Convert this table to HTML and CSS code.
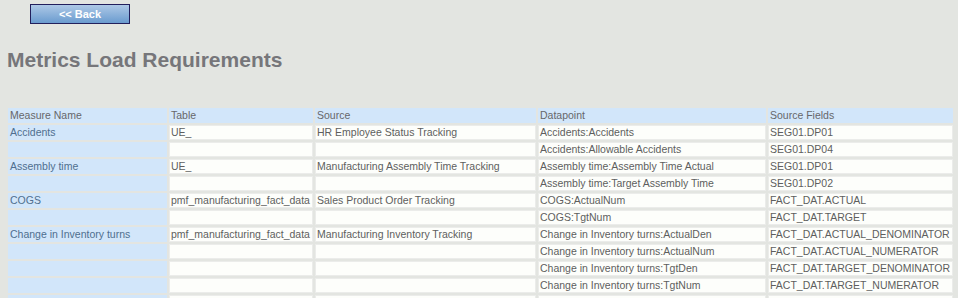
FILE: index.html
```html
<!DOCTYPE html>
<html>
<head>
<meta charset="utf-8">
<title>Metrics Load Requirements</title>
<link rel="stylesheet" href="styles.css">
</head>
<body>
<div class="toolbar">
  <button class="back-btn" type="button">&lt;&lt; Back</button>
</div>
<h1 class="page-title">Metrics Load Requirements</h1>
<table class="req-table">
  <thead>
    <tr><th class="c-measure">Measure Name</th><th class="c-table">Table</th><th class="c-source">Source</th><th class="c-dp">Datapoint</th><th class="c-fields">Source Fields</th></tr>
  </thead>
  <tbody>
    <tr><td class="measure">Accidents</td><td>UE_</td><td>HR Employee Status Tracking</td><td>Accidents:Accidents</td><td>SEG01.DP01</td></tr>
    <tr><td class="measure"></td><td></td><td></td><td>Accidents:Allowable Accidents</td><td>SEG01.DP04</td></tr>
    <tr><td class="measure">Assembly time</td><td>UE_</td><td>Manufacturing Assembly Time Tracking</td><td>Assembly time:Assembly Time Actual</td><td>SEG01.DP01</td></tr>
    <tr><td class="measure"></td><td></td><td></td><td>Assembly time:Target Assembly Time</td><td>SEG01.DP02</td></tr>
    <tr><td class="measure">COGS</td><td>pmf_manufacturing_fact_data</td><td>Sales Product Order Tracking</td><td>COGS:ActualNum</td><td>FACT_DAT.ACTUAL</td></tr>
    <tr><td class="measure"></td><td></td><td></td><td>COGS:TgtNum</td><td>FACT_DAT.TARGET</td></tr>
    <tr><td class="measure">Change in Inventory turns</td><td>pmf_manufacturing_fact_data</td><td>Manufacturing Inventory Tracking</td><td>Change in Inventory turns:ActualDen</td><td>FACT_DAT.ACTUAL_DENOMINATOR</td></tr>
    <tr><td class="measure"></td><td></td><td></td><td>Change in Inventory turns:ActualNum</td><td>FACT_DAT.ACTUAL_NUMERATOR</td></tr>
    <tr><td class="measure"></td><td></td><td></td><td>Change in Inventory turns:TgtDen</td><td>FACT_DAT.TARGET_DENOMINATOR</td></tr>
    <tr><td class="measure"></td><td></td><td></td><td>Change in Inventory turns:TgtNum</td><td>FACT_DAT.TARGET_NUMERATOR</td></tr>
    <tr><td class="measure"></td><td></td><td></td><td></td><td></td></tr>
  </tbody>
</table>
</body>
</html>
```
FILE: styles.css
```css
html, body {
  margin: 0;
  padding: 0;
  background: #e3e5e1;
  font-family: "Liberation Sans", Arial, sans-serif;
}

.toolbar {
  padding: 4px 0 0 30px;
  height: 20px;
}

.back-btn {
  display: block;
  box-sizing: border-box;
  width: 100px;
  height: 20px;
  margin: 0;
  padding: 0;
  border: 1px solid #221f5c;
  background: linear-gradient(#adc8e6, #6a9bcf);
  color: #ffffff;
  font-family: "Liberation Sans", Arial, sans-serif;
  font-size: 11px;
  font-weight: bold;
  line-height: 18px;
  text-align: center;
}

.page-title {
  margin: 24px 0 0 7px;
  font-size: 21px;
  font-weight: bold;
  line-height: 24px;
  color: #76767a;
}

/* requirements grid */
.req-table {
  margin: 34px 0 0 6px;
  border-collapse: separate;
  border-spacing: 2px;
  font-size: 10.5px;
  color: #5e5e5e;
  table-layout: fixed;
  width: 949px;
}

.req-table th,
.req-table td {
  box-sizing: border-box;
  height: 15px;
  padding: 0 1px;
  text-align: left;
  font-weight: normal;
  white-space: nowrap;
  overflow: hidden;
  line-height: 13px;
}

.req-table th {
  background: #d2e6fa;
  border: 1px solid #d2e6fa;
  color: #66666a;
}

.req-table td {
  background: #fdfefb;
  border: 1px solid #ebecea;
}

.req-table td.measure {
  background: #d2e6fa;
  border-color: #d2e6fa;
  color: #4f6f8f;
}

.c-measure { width: 159px; }
.c-table { width: 144px; }
.c-source { width: 221px; }
.c-dp { width: 228px; }
.c-fields { width: 185px; }
```
